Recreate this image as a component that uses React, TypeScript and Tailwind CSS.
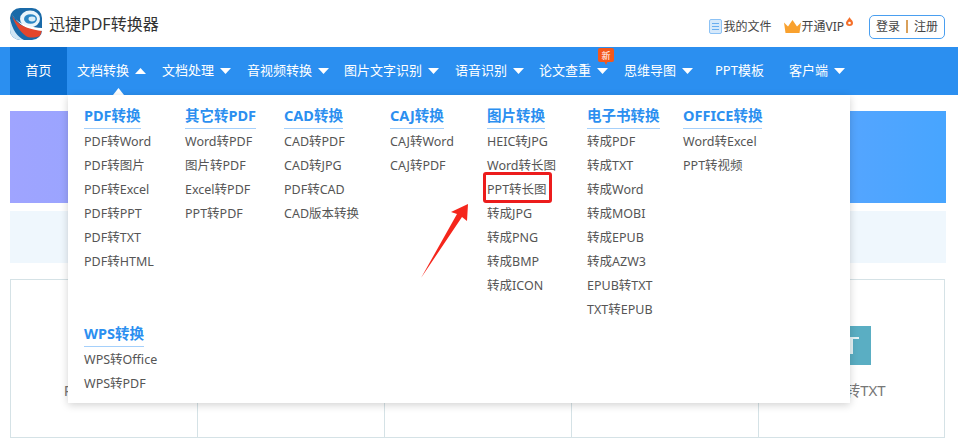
import React from "react";

const font = { fontFamily: '"Noto Sans", "Noto Sans CJK SC", sans-serif' };

const navItems = [
  { label: "文档处理", w: "w-[85px]", caret: true },
  { label: "音视频转换", w: "w-[97px]", caret: true },
  { label: "图片文字识别", w: "w-[111px]", caret: true },
  { label: "语音识别", w: "w-[84px]", caret: true },
  { label: "论文查重", w: "w-[85px]", caret: true, badge: true },
  { label: "思维导图", w: "w-[91px]", caret: true },
  { label: "PPT模板", w: "w-[74px]", caret: false },
  { label: "客户端", w: "w-[80px]", caret: true },
];

const columns = [
  { w: "w-[101px]", title: "PDF转换", items: ["PDF转Word", "PDF转图片", "PDF转Excel", "PDF转PPT", "PDF转TXT", "PDF转HTML"] },
  { w: "w-[99px]", title: "其它转PDF", items: ["Word转PDF", "图片转PDF", "Excel转PDF", "PPT转PDF"] },
  { w: "w-[106px]", title: "CAD转换", items: ["CAD转PDF", "CAD转JPG", "PDF转CAD", "CAD版本转换"] },
  { w: "w-[97px]", title: "CAJ转换", items: ["CAJ转Word", "CAJ转PDF"] },
  { w: "w-[100px]", title: "图片转换", items: ["HEIC转JPG", "Word转长图", "PPT转长图", "转成JPG", "转成PNG", "转成BMP", "转成ICON"] },
  { w: "w-[96px]", title: "电子书转换", items: ["转成PDF", "转成TXT", "转成Word", "转成MOBI", "转成EPUB", "转成AZW3", "EPUB转TXT", "TXT转EPUB"] },
  { w: "w-[100px]", title: "OFFICE转换", items: ["Word转Excel", "PPT转视频"] },
];

function Caret({ up = false }: { up?: boolean }) {
  return (
    <svg width="11" height="6" viewBox="0 0 11 6" className="shrink-0">
      <polygon points={up ? "5.500,0 11,6 0,6" : "0,0 11,0 5.500,6"} fill="#fff" />
    </svg>
  );
}

function Column({ title, items }: { title: string; items: string[] }) {
  return (
    <div className="flex flex-col items-start">
      <div className="h-[22px] border-b border-[#a5d0fb] text-[14.5px] leading-[16px] font-bold text-[#2b8ff0] whitespace-nowrap">{title}</div>
      <ul className="pt-px">
        {items.map((t) => (
          <li key={t} className="h-6 text-[12.5px] leading-6 text-[#555] whitespace-nowrap">{t}</li>
        ))}
      </ul>
    </div>
  );
}

function Logo() {
  return (
    <svg width="32" height="32" viewBox="0 0 32 32">
      <defs>
        <clipPath id="lc"><rect width="32" height="32" rx="10" /></clipPath>
      </defs>
      <g clipPath="url(#lc)">
        <rect width="32" height="32" fill="#1a6aa8" />
        <path d="M0 10 C2 22 8 29 14 32 L0 32 Z" fill="#cfe6f5" />
        <ellipse cx="20" cy="11" rx="10" ry="8.500" fill="#eaf5fb" />
        <ellipse cx="20.500" cy="11" rx="6.500" ry="4.800" fill="#2b86c4" />
        <ellipse cx="22" cy="11" rx="3.500" ry="2.400" fill="#d8edf8" />
        <path d="M1 5 C5 12 12 19 32 20 L32 23 C18 24 8 16 1 5 Z" fill="#ffffff" />
        <path d="M2 8 C6 14 11 20 32 23 L30 28 C24 30 19 30 16 28 C10 24 5 16 2 8 Z" fill="#e4462c" />
      </g>
    </svg>
  );
}

export default function App() {
  return (
    <div className="relative w-[958px] h-[443px] overflow-hidden bg-white" style={font}>
      <header className="h-[47px] flex items-center pl-[10px] pr-[13px]">
        <Logo />
        <span className="ml-[7px] text-[16px] text-[#333] whitespace-nowrap">迅捷PDF转换器</span>
        <div className="ml-auto flex items-center pt-[6px] text-[12px] text-[#444]">
          <svg width="13" height="15" viewBox="0 0 13 15" className="mr-[1px]">
            <rect x="0.500" y="0.500" width="12" height="14" rx="1.500" fill="#d6e9fb" stroke="#8cc2f5" />
            <path d="M3 4.500h7M3 7.500h7M3 10.500h7" stroke="#6aaef0" strokeWidth="1" />
          </svg>
          <span>我的文件</span>
          <svg width="17" height="13" viewBox="0 0 17 13" className="ml-[13px]">
            <path d="M0 2.500 L4 6.500 L8.500 0 L13 6.500 L17 2.500 L15.500 13 L1.500 13 Z" fill="#f9a12e" />
          </svg>
          <span>开通VIP</span>
          <svg width="7" height="9" viewBox="0 0 7 9" className="mb-[10px] ml-[2px]">
            <path d="M3.500 0 C4 2 7 3 7 6 A3.500 3 0 0 1 0 6 C0 4.500 1.500 3.500 3.500 0 Z" fill="#f5702a" />
            <circle cx="3.500" cy="6" r="1.300" fill="#fff" />
          </svg>
          <div className="ml-[16px] flex h-6 w-[76px] items-center justify-center gap-[6px] rounded-[5px] border border-[#4a9ff0] text-[#444]">
            <span>登录</span>
            <span className="h-[13px] w-[2px] bg-[#d9a05a]" />
            <span>注册</span>
          </div>
        </div>
      </header>

      <nav className="h-[48px] flex items-center bg-[#2b8ff0] pl-[10px] text-[13px] text-white">
        <div className="flex h-full w-[57px] items-center justify-center bg-[#0b6ecf]">首页</div>
        <div className="relative flex h-full w-[95px] items-center gap-[6px] pl-[10px]">
          <span>文档转换</span>
          <Caret up />
          <svg width="11" height="7" viewBox="0 0 11 7" className="absolute bottom-0 left-[46px]">
            <polygon points="5.500,0 11,7 0,7" fill="#fff" />
          </svg>
        </div>
        {navItems.map((n) => (
          <div key={n.label} className={`relative flex h-full shrink-0 items-center gap-[6px] whitespace-nowrap ${n.w}`}>
            <span>{n.label}</span>
            {n.caret && <Caret />}
            {n.badge && (
              <span className="absolute left-[59px] top-[1px] flex h-[14px] w-4 items-center justify-center rounded-[2px] bg-[#f4581c] text-[9px] leading-none text-white">
                新
                <span className="absolute left-[6px] top-[13px] h-0 w-0 border-x-[2px] border-t-[4px] border-x-transparent border-t-[#f4581c]" />
              </span>
            )}
          </div>
        ))}
      </nav>

      <main className="px-[10px] pt-4">
        <div className="h-[92px] w-[936px] bg-gradient-to-r from-[#9fa4ff] to-[#47a5ff]" />
        <div className="mt-2 h-[52px] w-[936px] bg-[#eff7fd]" />
        <div className="mt-4 grid h-[159px] w-[935px] grid-cols-[187px_187px_187px_187px_185px] border border-[#d5e2e6]">
          <div className="flex items-end justify-center border-r border-[#d5e2e6] pb-[36px] text-[15px] text-[#777]">PDF转Word</div>
          <div className="border-r border-[#d5e2e6]" />
          <div className="border-r border-[#d5e2e6]" />
          <div className="border-r border-[#d5e2e6]" />
          <div className="flex flex-col items-center justify-end pb-[36px] text-[15px] text-[#777]">
            <svg width="39" height="39" viewBox="0 0 39 39" className="mb-[14px]">
              <rect width="39" height="39" fill="#5aaec3" />
              <path d="M12 11h15v2h-6v15h-4v-15h-5z" fill="#e6f3f6" />
            </svg>
            <span>PDF转TXT</span>
          </div>
        </div>
      </main>

      <div className="absolute left-[68px] top-[95px] h-[308px] w-[782px] bg-white pl-4 pt-[12px] shadow-[0_2px_8px_rgba(0,0,0,0.18)]">
        <div className="flex h-[218px] items-start">
          {columns.map((c) => (
            <div key={c.title} className={`shrink-0 ${c.w}`}>
              <Column title={c.title} items={c.items} />
            </div>
          ))}
        </div>
        <Column title="WPS转换" items={["WPS转Office", "WPS转PDF"]} />
      </div>

      <div className="absolute left-[483px] top-[172px] h-[31px] w-[69px] rounded-[3px] border-[3px] border-[#ec1c1c]" />
      <svg className="absolute left-[415px] top-[200px]" width="60" height="82" viewBox="415 200 60 82">
        <polygon points="421,278 457,214 451,212 468,204 467,221 462,217" fill="#f5261c" />
      </svg>
    </div>
  );
}
